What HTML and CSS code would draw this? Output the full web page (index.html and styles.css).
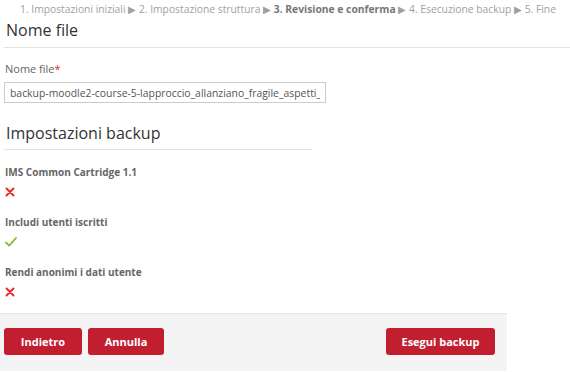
FILE: index.html
```html
<!DOCTYPE html>
<html lang="it">
<head>
  <meta charset="UTF-8">
  <title>Backup - Revisione e conferma</title>
  <link rel="stylesheet" href="styles.css">
</head>
<body>
  <div class="progress">
    <span>1. Impostazioni iniziali</span> &#9654;
    <span>2. Impostazione struttura</span> &#9654;
    <strong>3. Revisione e conferma</strong> &#9654;
    <span>4. Esecuzione backup</span> &#9654;
    <span>5. Fine</span>
  </div>

  <section class="block">
    <h2 class="legend">Nome file</h2>
    <div class="form-item">
      <label for="filename">Nome file<span class="req">*</span></label>
      <input type="text" id="filename" value="backup-moodle2-course-5-lapproccio_allanziano_fragile_aspetti_">
    </div>
  </section>

  <section class="block">
    <h2 class="legend legend-short">Impostazioni backup</h2>

    <div class="setting">
      <div class="setting-name">IMS Common Cartridge 1.1</div>
      <svg class="icon" width="10" height="10" viewBox="0 0 10 10"><path d="M1.5 1.5 L8.5 8.5 M8.5 1.5 L1.5 8.5" stroke="#ee2b2b" stroke-width="2" stroke-linecap="round"/></svg>
    </div>

    <div class="setting">
      <div class="setting-name">Includi utenti iscritti</div>
      <svg class="icon" width="12" height="10" viewBox="0 0 12 10"><path d="M1 5.5 L4.2 8.6 L11 1" fill="none" stroke="#7cc12a" stroke-width="1.8" stroke-linecap="round" stroke-linejoin="round"/></svg>
    </div>

    <div class="setting">
      <div class="setting-name">Rendi anonimi i dati utente</div>
      <svg class="icon" width="10" height="10" viewBox="0 0 10 10"><path d="M1.5 1.5 L8.5 8.5 M8.5 1.5 L1.5 8.5" stroke="#ee2b2b" stroke-width="2" stroke-linecap="round"/></svg>
    </div>
  </section>

  <div class="actions">
    <div class="actions-left">
      <button type="button" class="btn">Indietro</button>
      <button type="button" class="btn">Annulla</button>
    </div>
    <button type="submit" class="btn btn-wide">Esegui backup</button>
  </div>
</body>
</html>
```

FILE: styles.css
```css
body {
  margin: 0;
  padding: 0;
  font-family: 'Open Sans', sans-serif;
  color: #333;
  background-color: #fff;
}

.progress {
  padding: 3px 0 0 20px;
  font-size: 10.3px;
  line-height: 13px;
  color: #a0a0a0;
  white-space: nowrap;
}

.progress strong {
  color: #777;
  font-weight: bold;
}

.block {
  padding-left: 4px;
}

.legend {
  margin: 0;
  padding: 4px 0 7px 2px;
  font-size: 16px;
  font-weight: normal;
  line-height: 20px;
  color: #333;
  border-bottom: 1px solid #e3e3e3;
}

.legend-short {
  width: 306px;
  margin-top: 16px;
  padding-top: 4px;
  padding-bottom: 6px;
}

.form-item {
  margin-top: 14px;
}

label {
  display: block;
  padding-left: 1px;
  font-size: 11px;
  line-height: 14px;
  color: #666;
  margin-bottom: 6px;
}

.req {
  color: #e0242c;
}

input {
  display: block;
  box-sizing: border-box;
  width: 322px;
  height: 21px;
  padding: 0 5px;
  border: 1px solid #ccc;
  font-family: 'Open Sans', sans-serif;
  font-size: 10.4px;
  color: #555;
}

.setting {
  padding-left: 1px;
  margin-top: 19px;
}

.legend + .setting {
  margin-top: 16px;
}

.setting-name {
  font-size: 10px;
  font-weight: bold;
  line-height: 13px;
  color: #666;
}

.icon {
  display: block;
  margin-top: 8px;
}

.actions {
  display: flex;
  justify-content: space-between;
  align-items: flex-start;
  width: 491px;
  margin-top: 16px;
  padding: 14px 12px 16px 4px;
  background-color: #f4f4f4;
  border-top: 1px solid #e6e6e6;
}

.actions-left {
  display: flex;
  gap: 6px;
}

.btn {
  height: 27px;
  min-width: 76px;
  padding: 0 12px;
  background-color: #c11f30;
  color: #fff;
  border: none;
  border-radius: 3px;
  font-family: 'Open Sans', sans-serif;
  font-size: 11px;
  font-weight: bold;
  cursor: pointer;
}

.btn:first-child {
  width: 78px;
}

.btn-wide {
  width: 109px;
}
```
